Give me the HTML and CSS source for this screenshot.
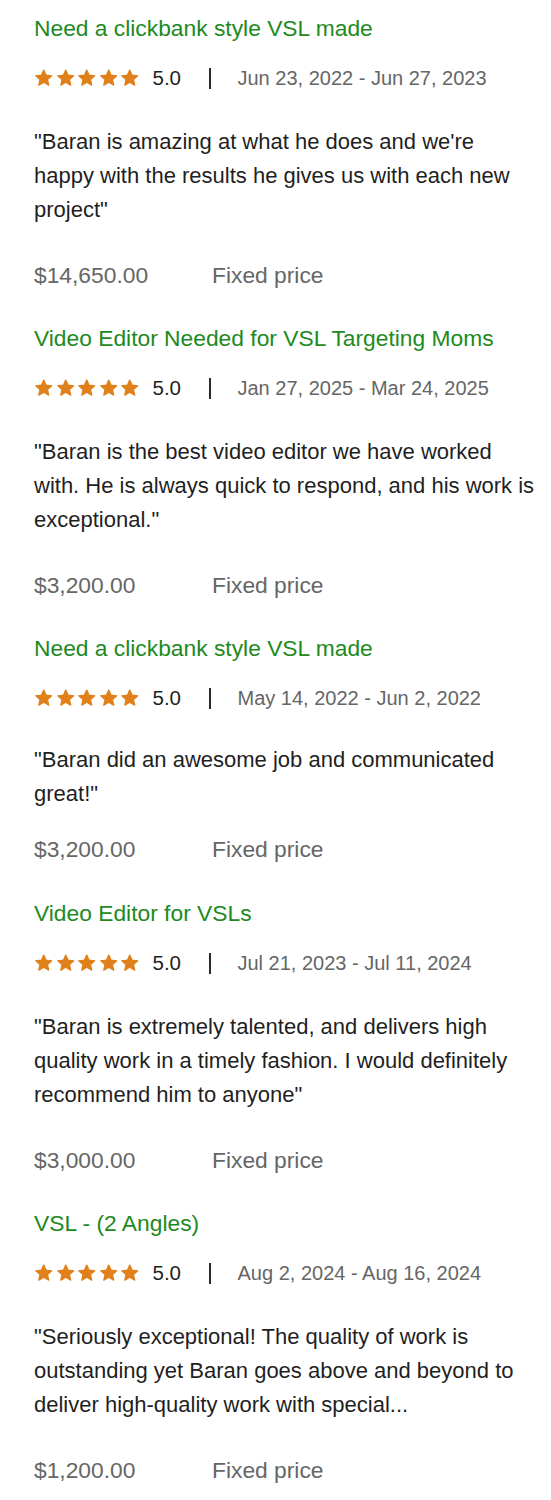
FILE: index.html
```html
<!DOCTYPE html>
<html lang="en">
<head>
<meta charset="utf-8">
<title>Reviews</title>
<link rel="stylesheet" href="styles.css">
</head>
<body>
<svg width="0" height="0" class="defs">
  <defs>
    <symbol id="star" viewBox="0 0 24 24">
      <path d="M12 2.6l2.9 6.3 6.9.7-5.2 4.7 1.5 6.8L12 17.6l-6.1 3.5 1.5-6.8-5.2-4.7 6.9-.7z"/>
    </symbol>
  </defs>
</svg>
<main class="list">

  <section class="review">
    <h3 class="title">Need a clickbank style VSL made</h3>
    <div class="meta">
      <span class="stars"><svg><use href="#star"/></svg><svg><use href="#star"/></svg><svg><use href="#star"/></svg><svg><use href="#star"/></svg><svg><use href="#star"/></svg></span>
      <span class="score">5.0</span>
      <span class="sep"></span>
      <span class="dates">Jun 23, 2022 - Jun 27, 2023</span>
    </div>
    <p class="quote">"Baran is amazing at what he does and we're happy with the results he gives us with each new project"</p>
    <div class="price"><span class="amount">$14,650.00</span><span class="kind">Fixed price</span></div>
  </section>

  <section class="review">
    <h3 class="title">Video Editor Needed for VSL Targeting Moms</h3>
    <div class="meta">
      <span class="stars"><svg><use href="#star"/></svg><svg><use href="#star"/></svg><svg><use href="#star"/></svg><svg><use href="#star"/></svg><svg><use href="#star"/></svg></span>
      <span class="score">5.0</span>
      <span class="sep"></span>
      <span class="dates">Jan 27, 2025 - Mar 24, 2025</span>
    </div>
    <p class="quote">"Baran is the best video editor we have worked with. He is always quick to respond, and his work is exceptional."</p>
    <div class="price"><span class="amount">$3,200.00</span><span class="kind">Fixed price</span></div>
  </section>

  <section class="review review--short">
    <h3 class="title">Need a clickbank style VSL made</h3>
    <div class="meta">
      <span class="stars"><svg><use href="#star"/></svg><svg><use href="#star"/></svg><svg><use href="#star"/></svg><svg><use href="#star"/></svg><svg><use href="#star"/></svg></span>
      <span class="score">5.0</span>
      <span class="sep"></span>
      <span class="dates">May 14, 2022 - Jun 2, 2022</span>
    </div>
    <p class="quote">"Baran did an awesome job and communicated great!"</p>
    <div class="price"><span class="amount">$3,200.00</span><span class="kind">Fixed price</span></div>
  </section>

  <section class="review">
    <h3 class="title">Video Editor for VSLs</h3>
    <div class="meta">
      <span class="stars"><svg><use href="#star"/></svg><svg><use href="#star"/></svg><svg><use href="#star"/></svg><svg><use href="#star"/></svg><svg><use href="#star"/></svg></span>
      <span class="score">5.0</span>
      <span class="sep"></span>
      <span class="dates">Jul 21, 2023 - Jul 11, 2024</span>
    </div>
    <p class="quote">"Baran is extremely talented, and delivers high quality work in a timely fashion. I would definitely recommend him to anyone"</p>
    <div class="price"><span class="amount">$3,000.00</span><span class="kind">Fixed price</span></div>
  </section>

  <section class="review">
    <h3 class="title">VSL - (2 Angles)</h3>
    <div class="meta">
      <span class="stars"><svg><use href="#star"/></svg><svg><use href="#star"/></svg><svg><use href="#star"/></svg><svg><use href="#star"/></svg><svg><use href="#star"/></svg></span>
      <span class="score">5.0</span>
      <span class="sep"></span>
      <span class="dates">Aug 2, 2024 - Aug 16, 2024</span>
    </div>
    <p class="quote">"Seriously exceptional! The quality of work is outstanding yet Baran goes above and beyond to deliver high-quality work with special...</p>
    <div class="price"><span class="amount">$1,200.00</span><span class="kind">Fixed price</span></div>
  </section>

</main>
</body>
</html>
```

FILE: styles.css
```css
* { box-sizing: border-box; }

html, body {
  margin: 0;
  padding: 0;
  background: #ffffff;
}

body {
  font-family: "Liberation Sans", Arial, sans-serif;
  color: #1f1f1f;
}

.defs {
  position: absolute;
  width: 0;
  height: 0;
  overflow: hidden;
}

.list {
  padding: 14px 0 0 34px;
  width: 551px;
}

.review {
  display: flex;
  flex-direction: column;
}

.title {
  margin: 0;
  font-size: 22.8px;
  font-weight: 400;
  line-height: 28px;
  color: #218a1e;
}

.meta {
  display: flex;
  align-items: center;
  height: 28px;
  margin-top: 22px;
}

.stars {
  display: flex;
  gap: 2px;
  fill: #e0801a;
  stroke: #e0801a;
  stroke-width: 1.6;
  stroke-linejoin: round;
}

.stars svg {
  width: 19.5px;
  height: 19.5px;
  display: block;
}

.score {
  margin-left: 13px;
  font-size: 20.5px;
  color: #1f1f1f;
}

.sep {
  width: 1.5px;
  height: 21px;
  background: #2a2a2a;
  margin-left: 28px;
}

.dates {
  margin-left: 27px;
  font-size: 20px;
  color: #666;
}

.quote {
  margin: 33px 0 0;
  width: 501px;
  font-size: 22px;
  line-height: 34px;
  color: #1f1f1f;
}

.price {
  display: flex;
  margin-top: 31px;
  font-size: 22.8px;
  line-height: 34px;
  color: #666;
  margin-bottom: 32px;
}

.amount {
  width: 178px;
}

.review--short .quote { margin-top: 31px; }
.review--short .price { margin-top: 21px; }
.review--short .price { margin-bottom: 33px; }
```
